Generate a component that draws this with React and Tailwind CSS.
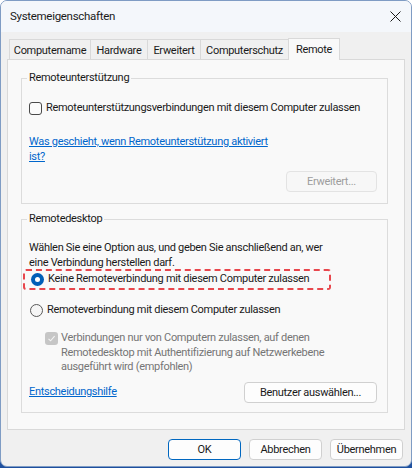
import React from 'react';

const font = { fontFamily: '"Segoe UI", Roboto, "Noto Sans", sans-serif' };

const Tab = ({ label, width, active = false }) => (
  <div
    className={
      (active
        ? 'relative z-10 -mb-px h-[22px] border border-b-0 border-[#d9d9d9] bg-[#f9f9f9] pt-[2px] -mt-[2px] '
        : 'h-[20px] border border-b-0 border-[#d9d9d9] bg-[#f0f0f0] pt-[2px] ') +
      'text-center ' +
      width
    }
  >
    {label}
  </div>
);

const Button = ({ children, className = '', disabled = false, primary = false }) => (
  <button
    disabled={disabled}
    className={
      'h-[21px] rounded-[4px] border text-[11px] leading-none tracking-[-0.3px] ' +
      (primary
        ? 'border-[#0067c0] bg-[#fdfdfd] text-[#1a1a1a] '
        : disabled
        ? 'border-[#e3e3e3] bg-[#f7f7f7] text-[#9d9d9d] '
        : 'border-[#d0d0d0] bg-[#fdfdfd] text-[#1a1a1a] ') +
      className
    }
  >
    {children}
  </button>
);

const Radio = ({ checked = false }) =>
  checked ? (
    <span className="flex h-[13px] w-[13px] shrink-0 items-center justify-center rounded-full bg-[#005fb8]">
      <span className="h-[5px] w-[5px] rounded-full bg-white" />
    </span>
  ) : (
    <span className="h-[13px] w-[13px] shrink-0 rounded-full border border-[#595959] bg-[#f5f5f5]" />
  );

export default function App() {
  return (
    <div className="h-[468px] w-[412px] bg-gradient-to-b from-white via-white to-[#1d4f9e]" style={font}>
      <div className="flex h-[467px] w-[412px] flex-col overflow-hidden whitespace-nowrap rounded-[7px] border border-[#7f9cc4] bg-[#f0f0f0] text-[11px] tracking-[-0.3px] text-[#1a1a1a]">
        {/* title bar */}
        <div className="flex h-[31px] shrink-0 items-center justify-between bg-[#f4f7fb] pl-[9px] pr-[9px]">
          <span className="text-[11.5px]">Systemeigenschaften</span>
          <svg width="11" height="11" viewBox="0 0 11 11" className="mr-[1px]">
            <path d="M0.5 0.5 L10.5 10.5 M10.5 0.5 L0.5 10.5" stroke="#1a1a1a" strokeWidth="1" />
          </svg>
        </div>

        {/* tabs */}
        <div className="mt-[7px] flex items-end pl-[8px] leading-[17px]">
          <Tab label="Computername" width="w-[82px]" />
          <Tab label="Hardware" width="w-[58px] -ml-px" />
          <Tab label="Erweitert" width="w-[54px] -ml-px" />
          <Tab label="Computerschutz" width="w-[89px] -ml-px" />
          <Tab label="Remote" width="w-[52px] -ml-px" active />
        </div>

        {/* panel */}
        <div className="mx-[6px] flex h-[371px] flex-col border border-[#d9d9d9] bg-[#f9f9f9] pl-[13px] pr-[16px] pt-[10px]">
          <fieldset className="h-[134px] border border-[#dcdcdc] pl-[7px] pr-[10px]">
            <legend className="-ml-[2px] px-[2px] leading-[16px]">Remoteunterstützung</legend>
            <label className="mt-[14px] flex items-center gap-[4px] leading-[16px]">
              <span className="h-[13px] w-[13px] shrink-0 rounded-[3px] border border-[#4a4a4a] bg-[#fbfbfb]" />
              <span>Remoteunterstützungsverbindungen mit diesem Computer zulassen</span>
            </label>
            <a href="#" className="mt-[18px] block leading-[15px] text-[#0066cc] underline">
              Was geschieht, wenn Remoteunterstützung aktiviert
              <br />
              ist?
            </a>
            <div className="mt-[7px] flex justify-end">
              <Button disabled className="w-[91px]">Erweitert...</Button>
            </div>
          </fieldset>

          <fieldset className="mt-[7px] h-[202px] border border-[#dcdcdc] pl-[7px] pr-[10px]">
            <legend className="-ml-[2px] px-[2px] leading-[16px]">Remotedesktop</legend>
            <p className="mt-[13px] leading-[15px]">
              Wählen Sie eine Option aus, und geben Sie anschließend an, wer
              <br />
              eine Verbindung herstellen darf.
            </p>
            <div className="-ml-[6px] -mt-[1px] flex h-[21px] w-[308px] items-center gap-[4px] rounded-[3px] border-2 border-dashed border-[#e8474d] pl-[6px]">
              <Radio checked />
              <span>Keine Remoteverbindung mit diesem Computer zulassen</span>
            </div>
            <label className="mt-[12px] flex items-center gap-[4px] pl-[1px] leading-[16px]">
              <Radio />
              <span>Remoteverbindung mit diesem Computer zulassen</span>
            </label>
            <div className="mt-[13px] flex gap-[3px] pl-[16px] text-[#757575]">
              <span className="mt-[1px] flex h-[13px] w-[13px] shrink-0 items-center justify-center rounded-[3px] bg-[#c6c6c6]">
                <svg width="9" height="9" viewBox="0 0 9 9">
                  <path d="M1.5 4.8 L3.6 6.8 L7.6 2.2" fill="none" stroke="#f4f4f4" strokeWidth="1.1" />
                </svg>
              </span>
              <span className="leading-[14.5px]">
                Verbindungen nur von Computern zulassen, auf denen
                <br />
                Remotedesktop mit Authentifizierung auf Netzwerkebene
                <br />
                ausgeführt wird (empfohlen)
              </span>
            </div>
            <div className="mt-[7px] flex items-center justify-between">
              <a href="#" className="text-[#0066cc] underline">Entscheidungshilfe</a>
              <Button className="w-[133px]">Benutzer auswählen...</Button>
            </div>
          </fieldset>
        </div>

        {/* bottom buttons */}
        <div className="mt-[9px] flex justify-end gap-[8px] pr-[8px]">
          <Button primary className="w-[73px]">OK</Button>
          <Button className="w-[73px]">Abbrechen</Button>
          <Button className="w-[73px]">Übernehmen</Button>
        </div>
      </div>
    </div>
  );
}
